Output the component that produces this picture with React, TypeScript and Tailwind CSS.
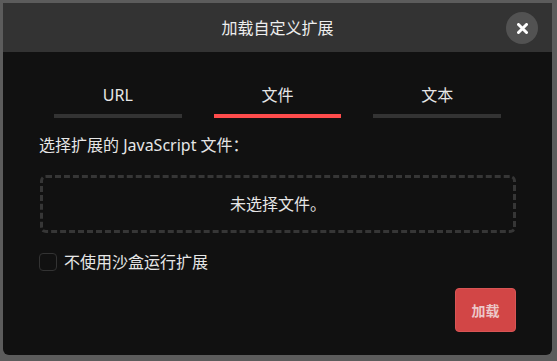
/**
 * Load custom extension dialog
 */

const tabs = [
  { label: 'URL', active: false },
  { label: '文件', active: true },
  { label: '文本', active: false },
]

export default function App() {
  return (
    <div className="w-[557px] h-[361px] bg-[#5c5c5c] p-[3px] font-['Noto_Sans','Noto_Sans_CJK_SC',sans-serif] overflow-hidden">
      <div className="w-[549px] h-[352px] bg-[#111111] rounded-b-md overflow-hidden flex flex-col">
        {/* Header */}
        <div className="relative h-[49px] shrink-0 bg-[#333333] flex items-center justify-center">
          <h1 className="text-[16px] leading-6 text-[#eeeeee]">加载自定义扩展</h1>
          <button className="absolute right-[14px] top-[9px] w-8 h-8 rounded-full bg-[#525252] flex items-center justify-center">
            <svg width="11" height="11" viewBox="0 0 11 11">
              <path d="M1.5 1.5 L9.5 9.5 M9.5 1.5 L1.5 9.5" stroke="#ffffff" strokeWidth="3" strokeLinecap="round" />
            </svg>
          </button>
        </div>

        {/* Body */}
        <div className="flex-1 flex flex-col px-9 pt-[31px]">
          {/* Tabs */}
          <div className="w-[447px] mx-auto grid grid-cols-3 gap-8">
            {tabs.map((tab) => (
              <div key={tab.label} className="flex flex-col">
                <span className="text-[16px] leading-6 text-center text-[#e6e6e6]">{tab.label}</span>
                <div className={tab.active ? 'mt-[7px] h-1 bg-[#ff4c4c]' : 'mt-[7px] h-1 bg-[#333333]'} />
              </div>
            ))}
          </div>

          <p className="mt-[15px] text-[16px] leading-6 text-[#e6e6e6]">选择扩展的 JavaScript 文件：</p>

          {/* File drop area */}
          <div className="mt-[18px] ml-px h-[58px] border-[3px] border-dashed border-[#363636] rounded-md flex items-center justify-center">
            <span className="text-[16px] leading-6 text-[#e6e6e6]">未选择文件。</span>
          </div>

          {/* Sandbox checkbox */}
          <label className="mt-[17px] flex items-center gap-[7px] h-6">
            <span className="w-[18px] h-[18px] rounded-[4px] border border-[#333333] bg-[#111111]" />
            <span className="text-[16px] leading-6 text-[#e6e6e6]">不使用沙盒运行扩展</span>
          </label>

          <div className="mt-[14px] flex justify-end">
            <button className="w-[61px] h-[44px] rounded-[4px] bg-[#d24646] border border-[#d85555] text-[14px] font-bold text-[#ecc8c8]">
              加载
            </button>
          </div>
        </div>
      </div>
    </div>
  )
}
